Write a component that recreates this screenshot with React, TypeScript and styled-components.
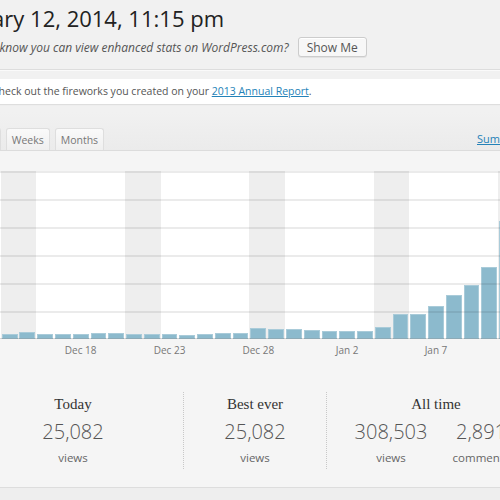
import styled, { createGlobalStyle } from "styled-components";

const GlobalStyle = createGlobalStyle`
  html, body {
    margin: 0;
    padding: 0;
    background: #f1f1f1;
  }
  body {
    width: 500px;
    height: 500px;
    overflow: hidden;
    font-family: "Open Sans", "Liberation Sans", sans-serif;
  }
`;

const Page = styled.div`
  width: 500px;
  height: 500px;
  overflow: hidden;
`;

const Header = styled.div`
  margin-left: -53px;
  padding-top: 4px;
`;

const Title = styled.h2`
  margin: 0;
  font-size: 22px;
  font-weight: 400;
  line-height: 29px;
  color: #222;
  white-space: nowrap;
`;

const Promo = styled.div`
  display: flex;
  align-items: center;
  gap: 9px;
  margin-top: 4px;
  padding-left: 9px;
  font-size: 12px;
  font-style: italic;
  color: #555;
  white-space: nowrap;
`;

const Button = styled.button`
  height: 20px;
  padding: 0 8px;
  font-family: inherit;
  font-size: 12px;
  color: #555;
  background: #f7f7f7;
  border: 1px solid #ccc;
  border-radius: 3px;
  box-shadow: inset 0 1px 0 #fff, 0 1px 0 rgba(0, 0, 0, 0.06);
`;

const Separator = styled.div`
  height: 1px;
  margin-top: 12px;
  background: #ddd;
  box-shadow: 0 1px 0 #fafafa;
`;

const Notice = styled.div`
  margin: 9px 0 0 -20px;
  width: 600px;
  height: 25px;
  padding-left: 12px;
  line-height: 25px;
  background: #fff;
  box-shadow: 0 1px 1px rgba(0, 0, 0, 0.08);
  font-size: 10.5px;
  color: #555;
  white-space: nowrap;
`;

const Link = styled.a`
  color: #2482b8;
  text-decoration: underline;
`;

const Panel = styled.div`
  margin-top: 8px;
  background: #f5f5f5;
  border-bottom: 1px solid #ddd;
`;

const TabBar = styled.div`
  height: 38px;
  display: flex;
  align-items: flex-end;
  justify-content: space-between;
  background: linear-gradient(#f1f1f1, #ebebeb);
  border-bottom: 1px solid #dcdcdc;
`;

const Tabs = styled.div`
  display: flex;
  gap: 5px;
  margin-left: -35px;
`;

const Tab = styled.div`
  height: 21px;
  padding: 0 5px;
  display: flex;
  align-items: center;
  font-size: 10.5px;
  color: #777;
  background: linear-gradient(#fafafa, #efefef);
  border: 1px solid #dedede;
  border-bottom: none;
  border-radius: 3px 3px 0 0;
`;

const Summary = styled.a`
  margin: 0 -40px 4px 0;
  width: 63px;
  font-size: 11px;
  color: #2482b8;
  text-decoration: underline;
`;

const Chart = styled.div`
  display: flex;
  margin-left: -34.8px;
  padding-top: 20px;
`;

const Day = styled.div`
  flex: 0 0 17.78px;
  min-width: 0;
  display: flex;
  flex-direction: column;
`;

const Plot = styled.div<{ $weekend: boolean }>`
  position: relative;
  height: 168px;
  display: flex;
  align-items: flex-end;
  justify-content: center;
  background: ${(p) => (p.$weekend ? "#eeeeee" : "#ffffff")};
  &::after {
    content: "";
    position: absolute;
    inset: 0;
    background: repeating-linear-gradient(
      to bottom,
      rgba(0, 0, 0, 0.08) 0,
      rgba(0, 0, 0, 0.08) 1.5px,
      transparent 1.5px,
      transparent 28px
    );
    border-bottom: 1px solid rgba(0, 0, 0, 0.09);
  }
`;

const Bar = styled.div`
  width: 15.8px;
  background: #8cbacd;
  box-shadow: inset 0 0 0 1px rgba(255, 255, 255, 0.25);
`;

const Label = styled.div`
  height: 22px;
  display: flex;
  align-items: center;
  justify-content: center;
  font-size: 10px;
  color: #777;
  white-space: nowrap;
`;

const Stats = styled.div`
  display: flex;
  margin-left: -37px;
  padding: 31px 0 18px;
`;

const StatCol = styled.div<{ $width: number; $divider?: boolean }>`
  flex: 0 0 ${(p) => p.$width}px;
  display: flex;
  flex-direction: column;
  align-items: center;
  border-right: ${(p) => (p.$divider ? "1px dotted #c8c8c8" : "none")};
`;

const StatTitle = styled.div`
  font-family: "Liberation Serif", "DejaVu Serif", serif;
  font-size: 15px;
  line-height: 24px;
  color: #333;
`;

const Pair = styled.div`
  display: flex;
`;

const Figure = styled.div`
  width: 90px;
  display: flex;
  flex-direction: column;
  align-items: center;
`;

const Number = styled.div`
  font-size: 20px;
  font-weight: 300;
  line-height: 31px;
  color: #555;
`;

const Unit = styled.div`
  font-size: 11.5px;
  line-height: 22px;
  color: #666;
`;

const Footer = styled.div`
  height: 20px;
  background: #eeeeee;
`;

// Dec 12 .. Jan 12 daily views (bar heights in px, 168 = full)
const heights = [
  5, 6, 5.4, 7, 5, 5, 5, 6.3, 5.7, 4.7, 5, 5.3, 4, 4.7, 6, 6.3, 11.4, 9.7,
  10.4, 8.7, 8, 8.3, 8.3, 12.4, 24.7, 24.7, 33, 44, 53.7, 72.4, 118, 168,
];

// the plotted range starts on Dec 14; earlier days only fill the left edge
const firstLabelled = 2;

const start = new Date(2013, 11, 12);
const days = heights.map((h, i) => {
  const d = new Date(start);
  d.setDate(start.getDate() + i);
  const wd = d.getDay();
  const month = d.getMonth() === 11 ? "Dec" : "Jan";
  const offset = i - firstLabelled;
  return {
    h,
    weekend: wd === 0 || wd === 6,
    label: offset >= 0 && offset % 5 === 4 ? `${month} ${d.getDate()}` : "",
  };
});

function Stat({ value, unit }: { value: string; unit: string }) {
  return (
    <Figure>
      <Number>{value}</Number>
      <Unit>{unit}</Unit>
    </Figure>
  );
}

export default function App() {
  return (
    <Page>
      <GlobalStyle />
      <Header>
        <Title>January 12, 2014, 11:15 pm</Title>
        <Promo>
          Did you know you can view enhanced stats on WordPress.com?
          <Button>Show Me</Button>
        </Promo>
      </Header>
      <Separator />
      <Notice>
        Check out the fireworks you created on your{" "}
        <Link>2013 Annual Report</Link>.
      </Notice>
      <Panel>
        <TabBar>
          <Tabs>
            <Tab>Days</Tab>
            <Tab>Weeks</Tab>
            <Tab>Months</Tab>
          </Tabs>
          <Summary>Summary</Summary>
        </TabBar>
        <Chart>
          {days.map((d, i) => (
            <Day key={i}>
              <Plot $weekend={d.weekend}>
                <Bar style={{ height: `${d.h}px` }} />
              </Plot>
              <Label>{d.label}</Label>
            </Day>
          ))}
        </Chart>
        <Stats>
          <StatCol $width={220} $divider>
            <StatTitle>Today</StatTitle>
            <Stat value="25,082" unit="views" />
          </StatCol>
          <StatCol $width={142} $divider>
            <StatTitle>Best ever</StatTitle>
            <Stat value="25,082" unit="views" />
          </StatCol>
          <StatCol $width={218}>
            <StatTitle>All time</StatTitle>
            <Pair>
              <Stat value="308,503" unit="views" />
              <Stat value="2,891" unit="comments" />
            </Pair>
          </StatCol>
        </Stats>
      </Panel>
      <Footer />
    </Page>
  );
}
